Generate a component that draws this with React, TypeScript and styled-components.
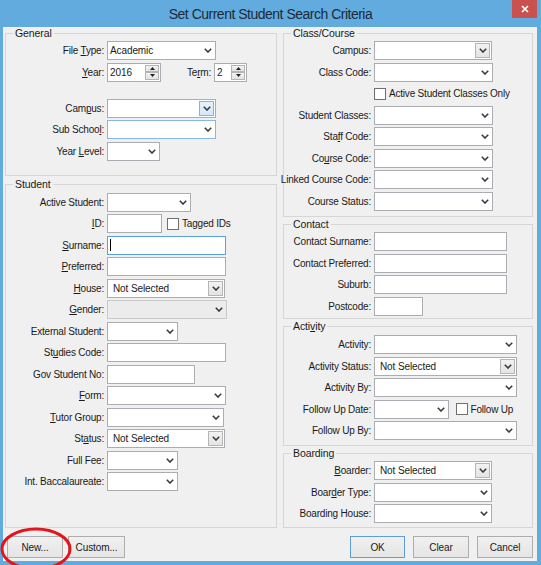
import React from "react";
import styled, { createGlobalStyle, css } from "styled-components";

const GlobalStyle = createGlobalStyle`
  html, body {
    margin: 0;
    padding: 0;
  }
  body {
    font-family: "Liberation Sans", Arial, sans-serif;
    background: #ffffff;
    color: #1a1a1a;
  }
`;

const Window = styled.div`
  position: relative;
  width: 541px;
  height: 565px;
  display: flex;
  flex-direction: column;
  background: #62abdf;
  overflow: hidden;
`;

const TitleBar = styled.div`
  height: 27px;
  flex: none;
  display: grid;
  grid-template-columns: 1fr auto 1fr;
  align-items: center;
`;

const Title = styled.div`
  grid-column: 2;
  font-size: 14px;
  letter-spacing: -0.5px;
  color: #1c2a38;
`;

const CloseButton = styled.div`
  grid-column: 3;
  justify-self: end;
  align-self: start;
  width: 25px;
  height: 18px;
  margin-right: 4px;
  background: #c9514f;
  display: flex;
  align-items: center;
  justify-content: center;
`;

const Body = styled.div`
  flex: 1;
  margin: 0 4px 4px 3px;
  padding: 1px 4px 0 2px;
  background: #f0f0f0;
  display: flex;
  flex-direction: column;
`;

const Columns = styled.div`
  height: 500px;
  flex: none;
  display: flex;
  gap: 6px;
`;

const Column = styled.div<{ $w: number; $gap: number }>`
  width: ${(p) => p.$w}px;
  display: flex;
  flex-direction: column;
  gap: ${(p) => p.$gap}px;
`;

const Group = styled.fieldset<{ $h?: number; $pad?: number }>`
  margin: 0;
  padding: ${(p) => p.$pad ?? 3}px 0 0 0;
  min-width: 0;
  box-sizing: border-box;
  border: 1px solid #d6d6d6;
  ${(p) =>
    p.$h
      ? css`
          height: ${p.$h}px;
          flex: none;
        `
      : css`
          flex: 1;
        `}
`;

const Legend = styled.legend`
  margin-left: 7px;
  padding: 0 2px;
  font-size: 10.5px;
  line-height: 11px;
  letter-spacing: -0.1px;
`;

const Row = styled.div<{ $mt?: number }>`
  display: flex;
  align-items: center;
  height: 19px;
  margin-top: ${(p) => p.$mt ?? 0}px;
  margin-bottom: 2.5px;
`;

/* right-aligned caption; long captions spill to the left, never into the field */
const Label = styled.span<{ $w: number }>`
  width: ${(p) => p.$w}px;
  flex: none;
  display: flex;
  justify-content: flex-end;
  margin-right: 3px;
  font-size: 10px;
  letter-spacing: -0.2px;
  white-space: nowrap;
`;

const Key = styled.span`
  text-decoration: underline;
  text-underline-offset: 1px;
`;

type Tone = "plain" | "hover" | "focus" | "off";

const borderFor: Record<Tone, string> = {
  plain: "#abadb3",
  hover: "#86b8e6",
  focus: "#5a9fe0",
  off: "#c9c9c9",
};

const Box = styled.div<{ $w: number; $tone: Tone; $inset: number }>`
  width: ${(p) => p.$w}px;
  height: 19px;
  flex: none;
  box-sizing: border-box;
  display: flex;
  align-items: center;
  padding-left: ${(p) => p.$inset}px;
  border: 1px solid ${(p) => borderFor[p.$tone]};
  background: ${(p) => (p.$tone === "off" ? "#ececec" : "#ffffff")};
  font-size: 10px;
  letter-spacing: -0.1px;
  white-space: nowrap;
`;

const Value = styled.span`
  flex: 1;
  overflow: hidden;
`;

const Caret = styled.span`
  width: 1px;
  height: 12px;
  background: #000;
`;

const ArrowZone = styled.span`
  width: 15px;
  height: 100%;
  display: flex;
  align-items: center;
  justify-content: center;
`;

const ArrowButton = styled.span<{ $lit?: boolean }>`
  width: 15px;
  height: 15px;
  margin-right: 1px;
  box-sizing: border-box;
  display: flex;
  align-items: center;
  justify-content: center;
  border: 1px solid ${(p) => (p.$lit ? "#7eb4ea" : "#b5b5b5")};
  background: ${(p) =>
    p.$lit
      ? "linear-gradient(#e5f1fb, #d3e8f9)"
      : "linear-gradient(#f2f2f2, #e4e4e4)"};
`;

const SpinStack = styled.span`
  width: 14px;
  height: 15px;
  margin-right: 1px;
  display: flex;
  flex-direction: column;
`;

const SpinHalf = styled.span`
  flex: 1;
  box-sizing: border-box;
  border: 1px solid #b5b5b5;
  background: linear-gradient(#f2f2f2, #e4e4e4);
  display: flex;
  align-items: center;
  justify-content: center;
`;

const CheckBox = styled.span<{ $ml: number }>`
  width: 12px;
  height: 12px;
  flex: none;
  box-sizing: border-box;
  margin-left: ${(p) => p.$ml}px;
  margin-right: 3px;
  border: 1px solid #707070;
  background: #fff;
`;

const CheckText = styled.span`
  font-size: 10px;
  letter-spacing: -0.2px;
  white-space: nowrap;
`;

const Footer = styled.div`
  margin-top: 8px;
  padding-left: 2px;
  display: flex;
  align-items: center;
`;

const PushButton = styled.button<{ $w: number; $ml: number; $default?: boolean }>`
  width: ${(p) => p.$w}px;
  height: 22px;
  margin: 0 0 0 ${(p) => p.$ml}px;
  padding: 0;
  box-sizing: border-box;
  border: 1px solid ${(p) => (p.$default ? "#5c9fd8" : "#adadad")};
  background: linear-gradient(#f0f0f0, #e5e5e5);
  font-family: inherit;
  font-size: 10px;
  letter-spacing: -0.1px;
  color: #1a1a1a;
`;

const Spacer = styled.div`
  flex: 1;
`;

const Annotation = styled.svg`
  position: absolute;
  left: 0;
  top: 0;
  pointer-events: none;
`;

const Chevron = () => (
  <svg width="8" height="5" viewBox="0 0 8 5">
    <polyline points="0.8,0.8 4,4 7.2,0.8" fill="none" stroke="#3a3a3a" strokeWidth="1.6" />
  </svg>
);

const Tri = ({ up }: { up?: boolean }) => (
  <svg width="5" height="3" viewBox="0 0 5 3">
    <polygon points={up ? "0,3 2.5,0 5,3" : "0,0 2.5,3 5,0"} fill="#222" />
  </svg>
);

const L = 98;
const R = 87;

type ComboProps = { w: number; value?: string; tone?: Tone; boxed?: boolean; lit?: boolean };

const Combo = ({ w, value, tone = "plain", boxed, lit }: ComboProps) => (
  <Box $w={w} $tone={tone} $inset={boxed ? 5 : 2}>
    <Value>{value}</Value>
    {boxed ? (
      <ArrowButton $lit={lit}>
        <Chevron />
      </ArrowButton>
    ) : (
      <ArrowZone>
        <Chevron />
      </ArrowZone>
    )}
  </Box>
);

const Text = ({ w, tone = "plain", caret }: { w: number; tone?: Tone; caret?: boolean }) => (
  <Box $w={w} $tone={tone} $inset={2}>
    {caret && <Caret />}
  </Box>
);

const Spin = ({ w, value }: { w: number; value: string }) => (
  <Box $w={w} $tone="plain" $inset={2}>
    <Value>{value}</Value>
    <SpinStack>
      <SpinHalf>
        <Tri up />
      </SpinHalf>
      <SpinHalf>
        <Tri />
      </SpinHalf>
    </SpinStack>
  </Box>
);

const Line = ({
  lw,
  label,
  mt,
  children,
}: {
  lw: number;
  label?: React.ReactNode;
  mt?: number;
  children?: React.ReactNode;
}) => (
  <Row $mt={mt}>
    <Label $w={lw}>
      <span>{label}</span>
    </Label>
    {children}
  </Row>
);

export default function App() {
  return (
    <>
      <GlobalStyle />
      <Window>
        <TitleBar>
          <Title>Set Current Student Search Criteria</Title>
          <CloseButton>
            <svg width="8" height="8" viewBox="0 0 8 8">
              <path d="M1 1 L7 7 M7 1 L1 7" stroke="#fff" strokeWidth="1.7" />
            </svg>
          </CloseButton>
        </TitleBar>

        <Body>
          <Columns>
            <Column $w={272} $gap={2.5}>
              <Group $h={148} $pad={2}>
                <Legend>General</Legend>
                <Line lw={L} label={<>File <Key>T</Key>ype:</>}>
                  <Combo w={109} value="Academic" />
                </Line>
                <Line lw={L} label={<><Key>Y</Key>ear:</>}>
                  <Spin w={54} value="2016" />
                  <Label $w={50}>
                    <span>Te<Key>r</Key>m:</span>
                  </Label>
                  <Spin w={33} value="2" />
                </Line>
                <Line lw={L} mt={17} label={<>Cam<Key>p</Key>us:</>}>
                  <Combo w={109} boxed lit />
                </Line>
                <Line lw={L} label={<>Sub Schoo<Key>l</Key>:</>}>
                  <Combo w={109} tone="hover" />
                </Line>
                <Line lw={L} label={<>Year <Key>L</Key>evel:</>}>
                  <Combo w={53} />
                </Line>
              </Group>

              <Group>
                <Legend>Student</Legend>
                <Line lw={L} label="Active Student:">
                  <Combo w={84} />
                </Line>
                <Line lw={L} label={<><Key>I</Key>D:</>}>
                  <Text w={55} />
                  <CheckBox $ml={5} />
                  <CheckText>Tagged IDs</CheckText>
                </Line>
                <Line lw={L} label={<><Key>S</Key>urname:</>}>
                  <Text w={119} tone="focus" caret />
                </Line>
                <Line lw={L} label={<><Key>P</Key>referred:</>}>
                  <Text w={119} />
                </Line>
                <Line lw={L} label={<><Key>H</Key>ouse:</>}>
                  <Combo w={118} value="Not Selected" boxed />
                </Line>
                <Line lw={L} label={<><Key>G</Key>ender:</>}>
                  <Combo w={120} tone="off" />
                </Line>
                <Line lw={L} label="External Student:">
                  <Combo w={71} />
                </Line>
                <Line lw={L} label={<>St<Key>u</Key>dies Code:</>}>
                  <Text w={119} />
                </Line>
                <Line lw={L} label="Gov Student No:">
                  <Text w={88} />
                </Line>
                <Line lw={L} label={<><Key>F</Key>orm:</>}>
                  <Combo w={119} />
                </Line>
                <Line lw={L} label={<><Key>T</Key>utor Group:</>}>
                  <Combo w={117} />
                </Line>
                <Line lw={L} label={<>St<Key>a</Key>tus:</>}>
                  <Combo w={118} value="Not Selected" boxed />
                </Line>
                <Line lw={L} label="Full Fee:">
                  <Combo w={71} />
                </Line>
                <Line lw={L} label="Int. Baccalaureate:">
                  <Combo w={71} />
                </Line>
              </Group>
            </Column>

            <Column $w={250} $gap={2}>
              <Group $h={189} $pad={2}>
                <Legend>Class/Course</Legend>
                <Line lw={R} label="Campus:">
                  <Combo w={118} boxed />
                </Line>
                <Line lw={R} label="Class Code:">
                  <Combo w={119} />
                </Line>
                <Line lw={R}>
                  <CheckBox $ml={0} />
                  <CheckText>Active Student Classes Only</CheckText>
                </Line>
                <Line lw={R} label="Student Classes:">
                  <Combo w={119} />
                </Line>
                <Line lw={R} label={<>Sta<Key>f</Key>f Code:</>}>
                  <Combo w={119} />
                </Line>
                <Line lw={R} label={<>Co<Key>u</Key>rse Code:</>}>
                  <Combo w={119} />
                </Line>
                <Line lw={R} label="Linked Course Code:">
                  <Combo w={119} />
                </Line>
                <Line lw={R} label="Course Status:">
                  <Combo w={119} />
                </Line>
              </Group>

              <Group $h={100} $pad={2}>
                <Legend>Contact</Legend>
                <Line lw={R} label="Contact Surname:">
                  <Text w={133} />
                </Line>
                <Line lw={R} label="Contact Preferred:">
                  <Text w={133} />
                </Line>
                <Line lw={R} label="Suburb:">
                  <Text w={133} />
                </Line>
                <Line lw={R} label="Postcode:">
                  <Text w={49} />
                </Line>
              </Group>

              <Group $h={124.5} $pad={3}>
                <Legend>Acti<Key>v</Key>ity</Legend>
                <Line lw={R} label="Activity:">
                  <Combo w={143} />
                </Line>
                <Line lw={R} label="Activity Status:">
                  <Combo w={143} value="Not Selected" boxed />
                </Line>
                <Line lw={R} label="Activity By:">
                  <Combo w={143} />
                </Line>
                <Line lw={R} label="Follow Up Date:">
                  <Combo w={75} />
                  <CheckBox $ml={6.5} />
                  <CheckText>Follow Up</CheckText>
                </Line>
                <Line lw={R} label="Follow Up By:">
                  <Combo w={143} />
                </Line>
              </Group>

              <Group $pad={2.5}>
                <Legend>Boarding</Legend>
                <Line lw={R} label={<><Key>B</Key>oarder:</>}>
                  <Combo w={118} value="Not Selected" boxed />
                </Line>
                <Line lw={R} label={<>Boar<Key>d</Key>er Type:</>}>
                  <Combo w={118} />
                </Line>
                <Line lw={R} label="Boarding House:">
                  <Combo w={118} />
                </Line>
              </Group>
            </Column>
          </Columns>

          <Footer>
            <PushButton $w={56} $ml={0}>New...</PushButton>
            <PushButton $w={57} $ml={5}>Custom...</PushButton>
            <Spacer />
            <PushButton $w={55} $ml={0} $default>OK</PushButton>
            <PushButton $w={56} $ml={8}>Clear</PushButton>
            <PushButton $w={56} $ml={8}>Cancel</PushButton>
          </Footer>
        </Body>

        <Annotation width="541" height="565" viewBox="0 0 541 565">
          <ellipse cx="36" cy="549" rx="34" ry="20" fill="none" stroke="#e3151b" strokeWidth="3" />
        </Annotation>
      </Window>
    </>
  );
}
